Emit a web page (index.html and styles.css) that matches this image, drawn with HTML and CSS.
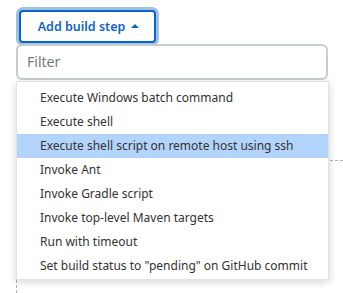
FILE: index.html
```html
<!DOCTYPE html>
<html>
<head>
<meta charset="utf-8">
<link rel="stylesheet" href="styles.css">
</head>
<body>
<div class="page">
  <button class="add-btn">Add build step <svg class="caret" width="8" height="5" viewBox="0 0 8 5"><path d="M0 5 L4 1 L8 5 Z" fill="currentColor"/></svg></button>
  <div class="filter">Filter</div>
  <div class="bg-area"></div>
  <ul class="menu">
    <li>Execute Windows batch command</li>
    <li>Execute shell</li>
    <li class="active">Execute shell script on remote host using ssh</li>
    <li>Invoke Ant</li>
    <li>Invoke Gradle script</li>
    <li>Invoke top-level Maven targets</li>
    <li>Run with timeout</li>
    <li>Set build status to "pending" on GitHub commit</li>
  </ul>
</div>
</body>
</html>
```
FILE: styles.css
```css
html, body {
  margin: 0;
  padding: 0;
  background: #fff;
  overflow: hidden;
}
body {
  font-family: "Noto Sans", "Open Sans", sans-serif;
  width: 343px;
  height: 293px;
}
.page {
  position: relative;
  height: 293px;
  padding: 10px 0 0 19px;
  box-sizing: border-box;
}
.add-btn {
  display: flex;
  align-items: center;
  justify-content: center;
  gap: 6px;
  box-sizing: border-box;
  width: 137px;
  height: 33px;
  margin: 0;
  padding: 0 0 1px 2px;
  border: 2px solid #0a63d0;
  border-radius: 4px;
  background: #fff;
  box-shadow: 0 0 0 3px #9fc2dc;
  color: #1063c6;
  font-family: "Noto Sans", sans-serif;
  font-weight: 600;
  font-size: 12.5px;
}
.caret {
  margin-top: -1px;
}
.filter {
  position: relative;
  box-sizing: border-box;
  width: 312px;
  height: 36px;
  margin: 1px 0 0 -3px;
  padding: 0 0 0 9px;
  border: 2px solid #c6ced3;
  border-radius: 6px;
  background: #fff;
  color: #787878;
  font-size: 14px;
  line-height: 31px;
}
.bg-area {
  box-sizing: border-box;
  width: 327px;
  height: 133px;
  margin: 80px 0 0 -3px;
  border-top: 1px dashed #b0b0b0;
  border-left: 1px dashed #b0b0b0;
}
.menu {
  position: absolute;
  left: 16px;
  top: 81px;
  box-sizing: border-box;
  width: 313px;
  height: 199px;
  margin: 0;
  padding: 4px 0 3px 0;
  list-style: none;
  background: #fff;
  border: 1px solid #e2e2e2;
  box-shadow: 0 2px 8px rgba(0,0,0,0.18);
}
.menu li {
  height: 24px;
  line-height: 24px;
  padding-left: 23px;
  color: #333;
  font-size: 12px;
  white-space: nowrap;
}
.menu li.active {
  background: #b3d4fc;
}
```
